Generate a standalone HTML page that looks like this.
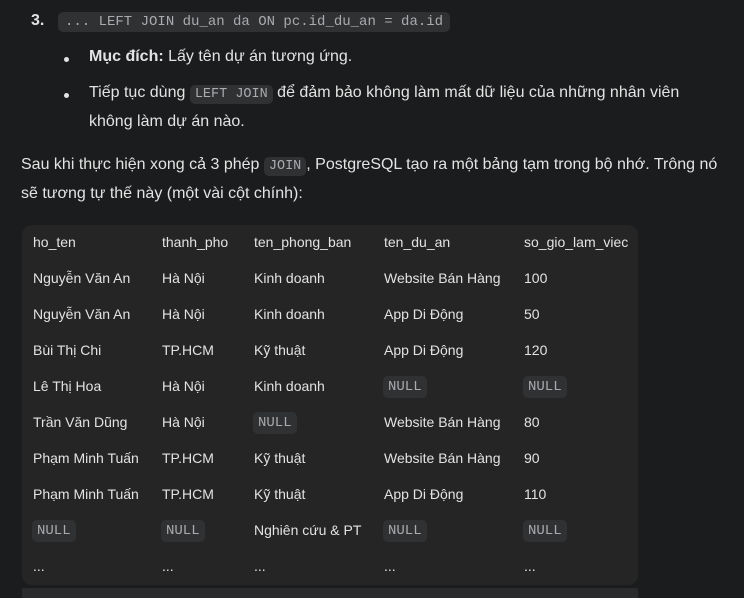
<!DOCTYPE html>
<html><head><meta charset="utf-8"><style>
body{margin:0;width:744px;height:592px;background:#1b1c1d;color:#e3e3e3;font-family:"Liberation Sans",sans-serif;font-size:16px;position:relative;overflow:hidden}
.a{position:absolute;white-space:nowrap}
code{font-family:"Liberation Mono",monospace;font-size:13.5px;color:#a9abae;background:#2f3133;border-radius:5px;padding:2px 5px}
.tb{position:absolute;left:22px;top:225px;width:616px;height:360px;background:#252525;border-radius:10px}
.c{position:absolute;font-size:14px;white-space:nowrap;color:#e3e3e3}
.dot{position:absolute;width:5px;height:5px;border-radius:50%;background:#e3e3e3}
</style></head><body>
<div class="a" style="left:31px;top:12px;font-weight:bold">3.</div>
<div class="a" style="left:58px;top:12px"><code style="padding:2px 7px;font-size:14px">... LEFT JOIN du_an da ON pc.id_du_an = da.id</code></div>
<div class="dot" style="left:64px;top:57px"></div>
<div class="a" style="left:89px;top:48px"><b>Mục đích:</b> Lấy tên dự án tương ứng.</div>
<div class="dot" style="left:64px;top:93px"></div>
<div class="a" style="left:89px;top:84px">Tiếp tục dùng <code>LEFT JOIN</code> để đảm bảo không làm mất dữ liệu của những nhân viên</div>
<div class="a" style="left:89px;top:113px">không làm dự án nào.</div>
<div class="a" style="left:21px;top:156px">Sau khi thực hiện xong cả 3 phép <code>JOIN</code>, PostgreSQL tạo ra một bảng tạm trong bộ nhớ. Trông nó</div>
<div class="a" style="left:21px;top:185px">sẽ tương tự thế này (một vài cột chính):</div>
<div class="tb"></div>
<div style="position:absolute;left:22px;top:588px;width:616px;height:10px;background:#2a2b2c"></div>
<div id="t"></div>
<script>
var rows=[["ho_ten","thanh_pho","ten_phong_ban","ten_du_an","so_gio_lam_viec"],
["Nguyễn Văn An","Hà Nội","Kinh doanh","Website Bán Hàng","100"],
["Nguyễn Văn An","Hà Nội","Kinh doanh","App Di Động","50"],
["Bùi Thị Chi","TP.HCM","Kỹ thuật","App Di Động","120"],
["Lê Thị Hoa","Hà Nội","Kinh doanh","#","#"],
["Trần Văn Dũng","Hà Nội","#","Website Bán Hàng","80"],
["Phạm Minh Tuấn","TP.HCM","Kỹ thuật","Website Bán Hàng","90"],
["Phạm Minh Tuấn","TP.HCM","Kỹ thuật","App Di Động","110"],
["#","#","Nghiên cứu &amp; PT","#","#"],
["...","...","...","...","..."]];
var xs=[33,162,254,384,524],h="";
rows.forEach(function(r,i){r.forEach(function(v,j){var y=234+i*36;
if(v=="#")h+='<div class="c" style="left:'+(xs[j]-1)+'px;top:'+(y-1)+'px"><code style="padding:3px 5px;font-size:14px">NULL</code></div>';
else h+='<div class="c" style="left:'+xs[j]+'px;top:'+y+'px">'+v+'</div>';});});
document.getElementById("t").innerHTML=h;
</script>
</body></html>
